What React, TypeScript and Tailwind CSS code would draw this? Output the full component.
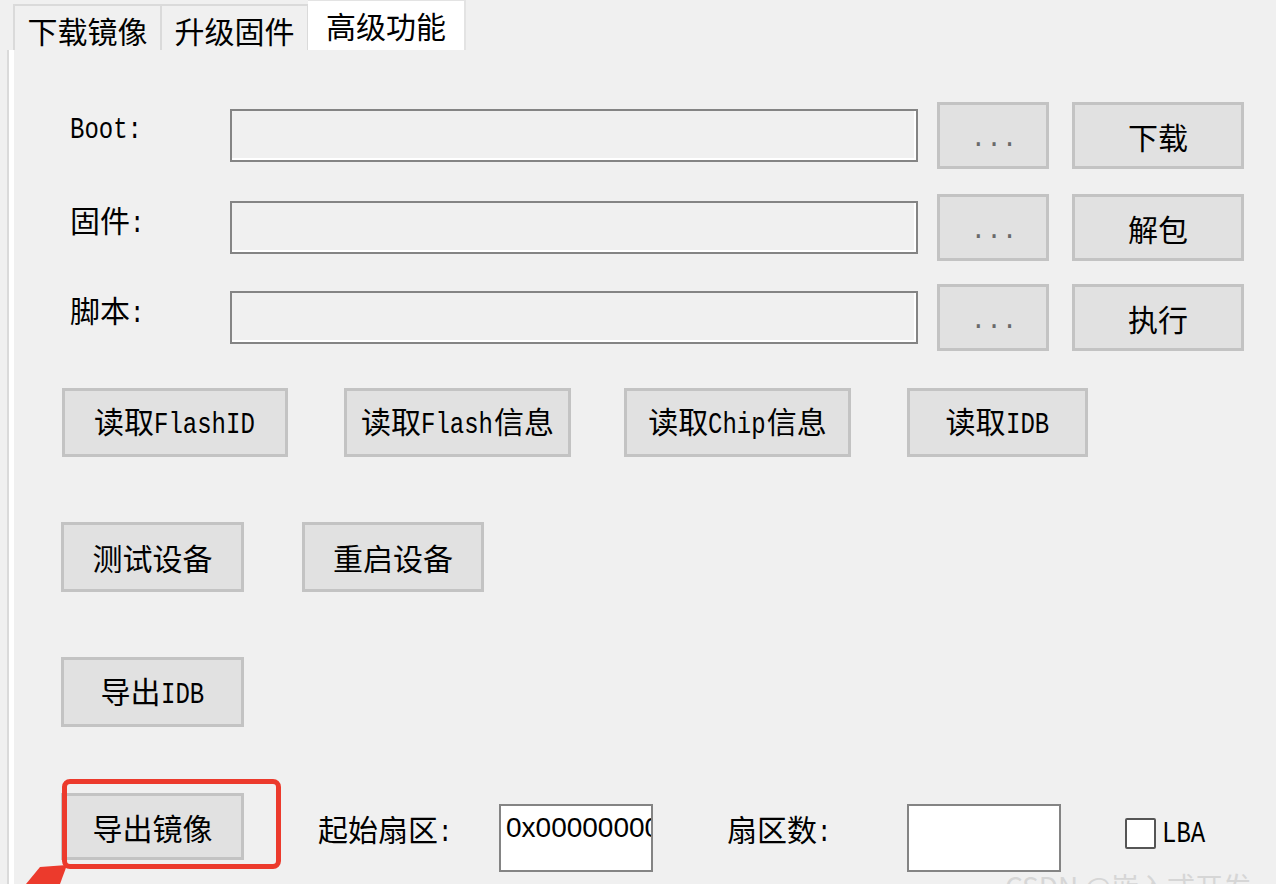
import type { ReactNode } from 'react';

// splits a label into CJK runs and condensed mono latin runs (SimSun look)
function Mixed({ text }: { text: string }) {
  const parts = text.split(/([\x20-\x7e]+)/).filter(Boolean);
  return (
    <span className="inline-flex items-baseline whitespace-nowrap leading-none">
      {parts.map((p, i) =>
        /^[\x20-\x7e]+$/.test(p) ? (
          <span key={i} className="inline-block overflow-visible" style={{ width: `${p.length * 14.6}px` }}>
            <span className="inline-block origin-left scale-x-[0.8] font-['Liberation_Mono',monospace] text-[30px] leading-none">
              {p}
            </span>
          </span>
        ) : (
          <span key={i} className="font-['Noto_Sans_CJK_SC',sans-serif] text-[30px] leading-none">
            {p}
          </span>
        )
      )}
    </span>
  );
}

function Btn({ children, className }: { children: ReactNode; className: string }) {
  return (
    <div className={`flex shrink-0 items-center justify-center border-[3px] border-[#c3c3c3] bg-[#e1e1e1] text-black ${className}`}>
      {children}
    </div>
  );
}

function Tab({ label, active }: { label: string; active?: boolean }) {
  if (active) {
    return (
      <div className="-ml-[1px] flex h-[50px] w-[158px] items-center justify-center border-t border-r-2 border-[#e3e3e3] bg-white pb-[2px] font-['Noto_Sans_CJK_SC',sans-serif] text-[30px] leading-none">
        {label}
      </div>
    );
  }
  return (
    <div className="-ml-[2px] flex h-[46px] w-[149px] items-center justify-center border-2 border-b-0 border-[#dadada] pt-[4px] font-['Noto_Sans_CJK_SC',sans-serif] text-[30px] leading-none first:ml-0">
      {label}
    </div>
  );
}

const fileRows = [
  { label: 'Boot:', action: '下载' },
  { label: '固件:', action: '解包' },
  { label: '脚本:', action: '执行' },
];

export default function App() {
  return (
    <div className="relative h-[884px] w-[1276px] overflow-hidden bg-[#f0f0f0] text-black">
      <div className="flex h-[50px] items-end pl-[13px]">
        <Tab label="下载镜像" />
        <Tab label="升级固件" />
        <Tab label="高级功能" active />
      </div>

      <div className="ml-[7px] h-[834px] border-l-2 border-[#dadada]">
        <div className="h-full border-l-[5px] border-white pt-[52px]">
          {fileRows.map((row, i) => (
            <div key={row.label} className={`flex h-[67px] items-center ${i === 0 ? '' : i === 1 ? 'mt-[25px]' : 'mt-[23px]'}`}>
              <div className="w-[216px] shrink-0 pb-[12px] pl-[56px]">
                <Mixed text={row.label} />
              </div>
              <div className="h-[53px] w-[688px] shrink-0 border-2 border-[#848484] bg-[#f0f0f0] shadow-[inset_-2px_-2px_0_#ffffff]" />
              <Btn className="ml-[19px] h-[67px] w-[112px]">
                <span className="pt-[6px] pl-[2px] font-['Liberation_Mono',monospace] text-[26px] leading-none text-[#6a6a6a]">...</span>
              </Btn>
              <Btn className="ml-[23px] h-[67px] w-[172px]">
                <Mixed text={row.action} />
              </Btn>
            </div>
          ))}

          <div className="mt-[37px] flex h-[69px] pl-[48px]">
            <Btn className="h-[69px] w-[226px]"><Mixed text="读取FlashID" /></Btn>
            <Btn className="ml-[56px] h-[69px] w-[227px]"><Mixed text="读取Flash信息" /></Btn>
            <Btn className="ml-[53px] h-[69px] w-[227px]"><Mixed text="读取Chip信息" /></Btn>
            <Btn className="ml-[56px] h-[69px] w-[181px]"><Mixed text="读取IDB" /></Btn>
          </div>

          <div className="mt-[65px] flex h-[70px] pl-[47px]">
            <Btn className="h-[70px] w-[183px]"><Mixed text="测试设备" /></Btn>
            <Btn className="ml-[58px] h-[70px] w-[182px]"><Mixed text="重启设备" /></Btn>
          </div>

          <div className="mt-[65px] flex h-[70px] pl-[47px]">
            <Btn className="h-[70px] w-[183px]"><Mixed text="导出IDB" /></Btn>
          </div>

          <div className="mt-[66px] flex items-start pl-[47px]">
            <Btn className="h-[67px] w-[183px]"><Mixed text="导出镜像" /></Btn>
            <div className="ml-[74px] mt-[20px] w-[181px] shrink-0">
              <Mixed text="起始扇区:" />
            </div>
            <div className="mt-[11px] h-[68px] w-[154px] shrink-0 overflow-hidden border-2 border-[#848484] bg-white pt-[8px] pl-[5px] font-['Liberation_Sans',sans-serif] text-[28px] leading-none whitespace-nowrap">
              0x00000000
            </div>
            <div className="ml-[74px] mt-[20px] w-[180px] shrink-0">
              <Mixed text="扇区数:" />
            </div>
            <div className="mt-[11px] h-[68px] w-[154px] shrink-0 border-2 border-[#848484] bg-white" />
            <div className="ml-[64px] mt-[25px] h-[31px] w-[31px] shrink-0 rounded-[2px] border-2 border-[#555555] bg-white" />
            <div className="ml-[6px] mt-[26px]">
              <Mixed text="LBA" />
            </div>
          </div>
        </div>
      </div>

      {/* annotation overlay */}
      <div className="absolute left-[62px] top-[779px] h-[90px] w-[219px] rounded-[8px] border-[5px] border-[#ec3a2c]" />
      <svg className="absolute left-0 top-[860px]" width="80" height="24" viewBox="0 0 80 24">
        <polygon points="67,5 40,7 26,24 60,24" fill="#ec3a2c" />
      </svg>
      <div className="absolute left-[1005px] top-[872px] whitespace-nowrap font-['Noto_Sans_CJK_SC',sans-serif] text-[28px] leading-none text-[#d6d6d6]">
        CSDN @嵌入式开发
      </div>
    </div>
  );
}
